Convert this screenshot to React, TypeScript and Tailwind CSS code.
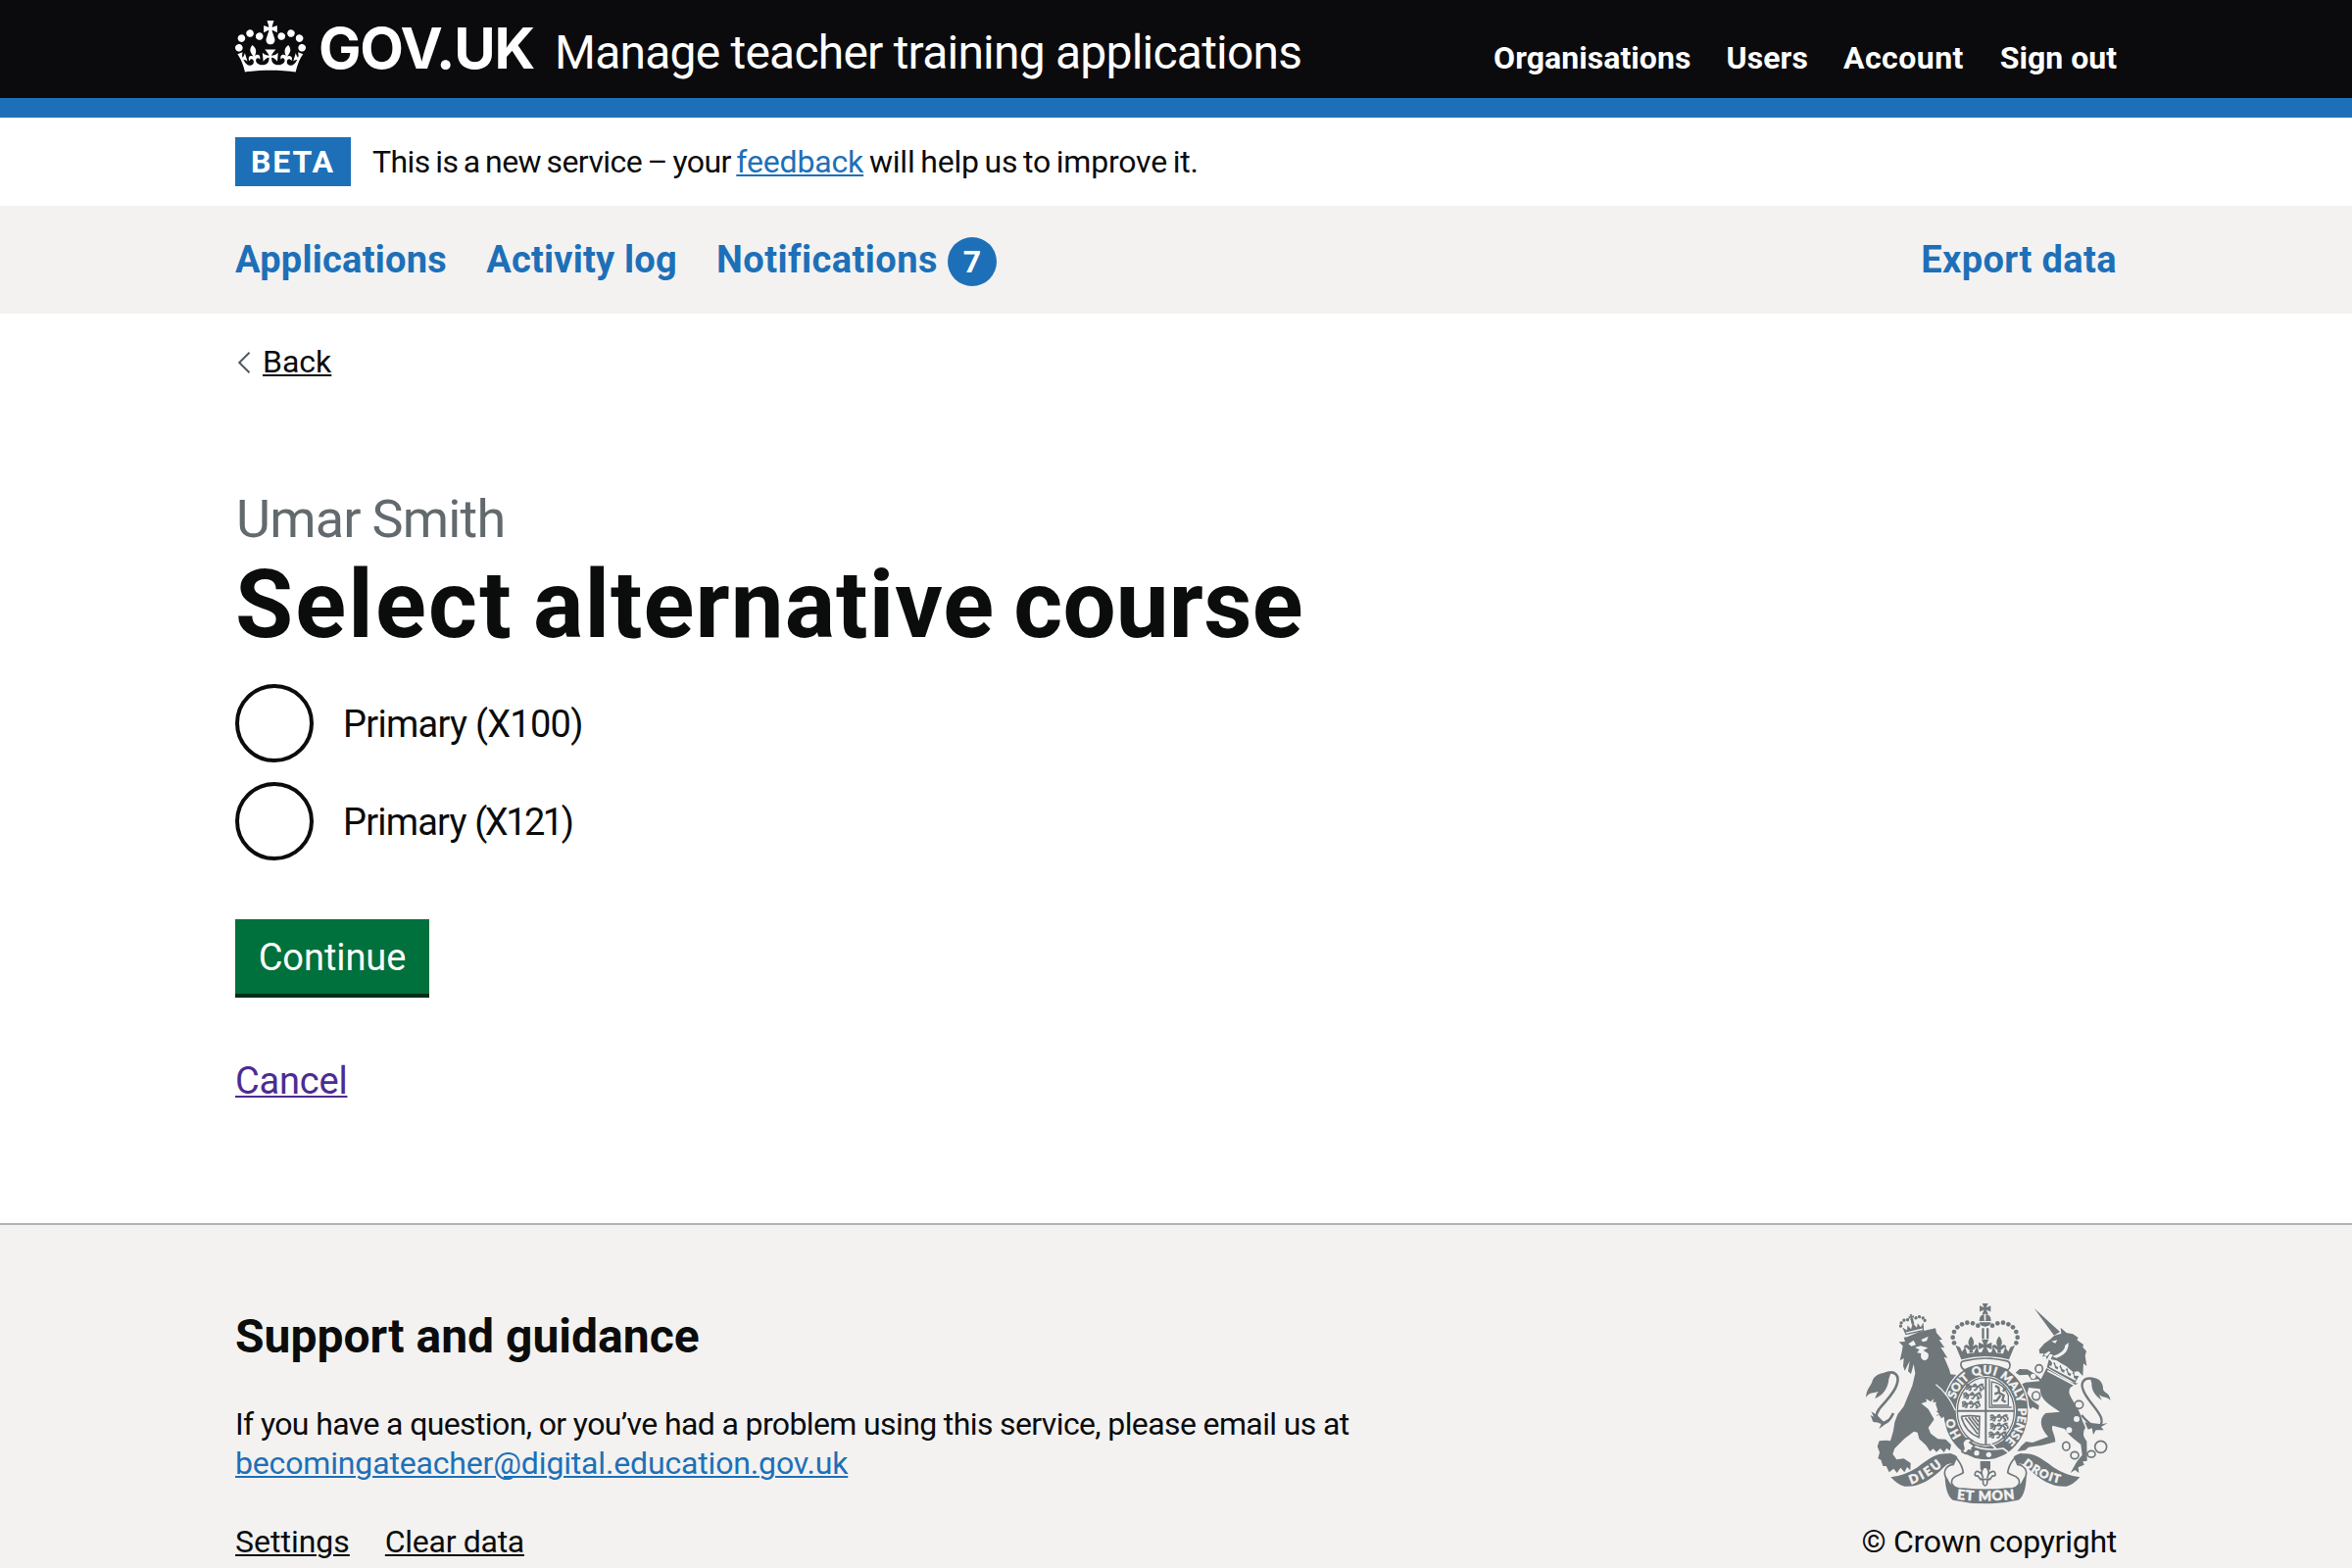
import React from "react";

const ARMS = "#6f777b";
const PAPER = "#f3f2f1";

function CrownLogo() {
  return (
    <svg className="mt-[21px] h-[53px] w-[72px] shrink-0" viewBox="0 0 132 97" fill="#ffffff" aria-hidden="true">
      <path
        fillRule="evenodd"
        d="M25 30.2c3.5 1.5 7.7-.2 9.1-3.7 1.5-3.6-.2-7.8-3.9-9.2-3.6-1.4-7.6.3-9.1 3.9-1.4 3.5.3 7.5 3.9 9zM9 39.5c3.6 1.5 7.8-.2 9.2-3.7 1.5-3.6-.2-7.8-3.9-9.1-3.6-1.5-7.6.2-9.1 3.8-1.4 3.5.3 7.5 3.8 9zM4.4 57.2c3.5 1.5 7.7-.2 9.1-3.8 1.5-3.6-.2-7.7-3.9-9.1-3.5-1.5-7.6.3-9.1 3.8-1.4 3.5.3 7.6 3.9 9.1zm38.3-21.4c3.5 1.5 7.7-.2 9.1-3.8 1.5-3.6-.2-7.7-3.9-9.1-3.6-1.5-7.6.3-9.1 3.8-1.3 3.6.4 7.7 3.9 9.1zm64.4-5.6c-3.6 1.5-7.8-.2-9.1-3.7-1.5-3.6.2-7.8 3.8-9.2 3.6-1.4 7.7.3 9.2 3.9 1.3 3.5-.4 7.5-3.9 9zm15.9 9.3c-3.6 1.5-7.7-.2-9.1-3.7-1.5-3.6.2-7.8 3.7-9.1 3.6-1.5 7.7.2 9.2 3.8 1.5 3.5-.3 7.5-3.8 9zm4.7 17.7c-3.6 1.5-7.8-.2-9.2-3.8-1.5-3.6.2-7.7 3.9-9.1 3.6-1.5 7.7.3 9.2 3.8 1.3 3.5-.4 7.6-3.9 9.1zM89.3 35.8c-3.6 1.5-7.8-.2-9.2-3.8-1.4-3.6.2-7.7 3.9-9.1 3.6-1.5 7.7.3 9.2 3.8 1.4 3.6-.3 7.7-3.9 9.1zM69.7 17.7l8.9 4.7V9.3l-8.9 2.8c-.2-.3-.5-.6-.9-.9L72.4 0H59.6l3.5 11.2c-.3.3-.6.5-.9.9l-8.8-2.8v13.1l8.8-4.7c.3.3.6.7.9.9l-5 15.4v.1c-.2.8-.4 1.6-.4 2.4 0 4.1 3.1 7.5 7 8.1h.2c.3 0 .7.1 1 .1.4 0 .7 0 1-.1h.2c4-.6 7.1-4.1 7.1-8.1 0-.8-.1-1.7-.4-2.4V34l-5.1-15.4c.4-.2.7-.6 1-.9zM66 92.8c16.9 0 32.8 1.1 47.1 3.2 4-16.9 8.9-26.7 14-33.5l-9.6-3.4c1 4.9 1.1 7.2 0 10.2-1.5-1.4-3-4.3-4.2-8.7L108.6 76c2.8-2 5-3.2 7.5-3.3-4.4 9.4-10 11.9-13.6 11.2-4.3-.8-6.3-4.6-5.6-7.9 1-4.7 5.7-5.9 8-.5 4.3-8.7-3-11.4-7.6-8.8 7.1-7.2 7.9-13.5 2.1-21.1-8 6.1-8.1 12.3-4.5 20.8-4.7-5.4-12.1-2.5-9.5 6.2 3.4-5.2 7.9-2 7.2 3.1-.6 4.3-6.4 7.8-13.5 7.2-10.3-.9-10.9-8-11.2-13.8 2.5-.5 7.1 1.8 11 7.3L80.2 60c-4.1 4.4-8 5.3-12.3 5.4 1.4-4.4 8-11.6 8-11.6H55.5s6.4 7.2 7.9 11.6c-4.2-.1-8-1-12.3-5.4l1.4 16.4c3.9-5.5 8.5-7.7 10.9-7.3-.3 5.8-.9 12.8-11.1 13.8-7.2.6-12.9-2.9-13.5-7.2-.7-5 3.8-8.3 7.1-3.1 2.7-8.7-4.6-11.6-9.4-6.2 3.7-8.5 3.6-14.7-4.6-20.8-5.8 7.6-5 13.9 2.2 21.1-4.7-2.6-11.9.1-7.7 8.8 2.3-5.5 7.1-4.2 8.1.5.7 3.3-1.3 7.1-5.7 7.9-3.5.7-9-1.8-13.5-11.2 2.5.1 4.7 1.3 7.5 3.3l-4.7-15.4c-1.2 4.4-2.7 7.2-4.3 8.7-1.1-3-.9-5.3 0-10.2l-9.5 3.4c5 6.9 9.9 16.7 14 33.5 14.8-2.1 30.8-3.2 47.7-3.2z"
      />
    </svg>
  );
}

const crownBeads: [number, number][] = [
  [385, 98], [369, 91], [352, 89], [336, 94], [322, 103], [312, 117], [308, 134], [312, 151],
];

function Maltese({ x, y, r }: { x: number; y: number; r: number }) {
  return (
    <path
      transform={`translate(${x} ${y}) scale(${r})`}
      d="M-.55-1H.55L.2-.2 1-.55V.55L.2.2 .55 1H-.55L-.2.2-1 .55V-.55L-.2-.2Z"
    />
  );
}

function Fleur({ x, y, s }: { x: number; y: number; s: number }) {
  return (
    <path
      transform={`translate(${x} ${y}) scale(${s})`}
      d="M0-22C9-10 9-4 4 5 12-3 20 0 19 10 14 6 10 9 8 14H4L5 22H-5L-4 14H-8C-10 9-14 6-19 10-20 0-12-3-4 5-9-4-9-10 0-22Z"
    />
  );
}

/* One passant lion of the quartered shield, roughly 62 wide and 22 high. */
function Passant({ x, y }: { x: number; y: number }) {
  return (
    <path
      transform={`translate(${x} ${y})`}
      fill="none"
      stroke={ARMS}
      strokeWidth="5"
      strokeLinejoin="round"
      d="M2 4l8-2 4 4-4 4-8-2M12 8h28l8-6h8M14 10l-8 6H2M18 10l-2 9h-6M38 10l-6 9h-6M42 9l8 8v3h-7M24 5l6-4 4 4M48 4l8 6v8"
    />
  );
}

function RoyalArms({ className }: { className: string }) {
  return (
    <svg className={className} viewBox="42 30 756 615" fill={ARMS} role="img" aria-label="Royal coat of arms">
      <defs>
        <path id="garter" d="M409 474A99 114 0 0 1 409 246A99 114 0 0 1 409 474" />
        <path id="ribbonLeft" d="M180 584Q232 568 290 514" />
        <path id="ribbonRight" d="M521 524Q580 574 652 584" />
        <path id="ribbonMid" d="M318 629Q408 640 502 628" />
      </defs>

      {/* lion */}
      <path d="M143 148L162 147 158 134 168 133 205 117 255 106 258 120 276 141 266 142 283 166 271 164 292 197 281 194 297 232 301 247 320 249 300 272 292 304 290 316 309 342 315 366 306 387 297 379 291 394 283 378 272 382 270 368 253 378 257 360 240 358 251 345 212 336 222 344 246 364 250 386 233 410 240 428 262 445 286 446 303 463 299 481 289 473 281 486 270 474 258 485 248 475 238 483 226 464 205 445 200 425 189 422 160 444 130 474 124 491 136 508 158 505 179 519 178 541 168 531 160 547 148 533 137 549 127 536 113 547 104 528 94 528 88 509 79 505 84 486 77 468 83 451 104 449 117 451 126 420 130 394 139 370 158 345 168 320 184 282 193 244 188 216 180 246 171 238 176 206 161 236 156 222 158 198 146 205 152 178 155 160Z" />
      <path fill={PAPER} d="M212 336L228 331 226 322 240 331 250 322 247 334 262 330 268 338 262 345 270 356 257 360 268 369 258 372 262 384 248 380 232 352Z" />
      <path fill={PAPER} d="M172 154L188 143 195 157 181 161ZM211 141L233 131 228 145 216 148ZM192 165L209 160 232 166 218 174 233 184Q236 203 221 205 207 201 211 183L198 181 206 172Z" />
      <g transform="rotate(-13 186 98)">
        <path d="M158 121H215L219 96 208 108 202 94 196 107 187 90 178 107 170 94 165 108 153 96Z" />
        <path fill={PAPER} d="M160 113h52v4h-52z" />
        <Maltese x={187} y={71} r={8} />
        <path d="M183 76h8v18h-8z" />
        {[
          [174, 77], [163, 76], [153, 82], [149, 91], [200, 77], [211, 76], [221, 82], [225, 91],
        ].map(([x, y]) => (
          <circle key={`${x}-${y}`} cx={x} cy={y} r="5" />
        ))}
      </g>
      <path fill="none" stroke={ARMS} strokeWidth="8" d="M97 247C134 230 145 254 137 277C128 308 100 330 82 354C70 372 72 386 86 394C104 400 114 390 126 366" />
      <path d="M118 244C96 238 70 246 62 266C58 284 44 288 42 318C55 300 63 306 80 300C71 312 75 312 69 322C94 312 110 290 112 262ZM76 372L58 361 66 377 56 372 64 393 90 396 82 414 108 395 124 376 96 392Z" />

      {/* unicorn */}
      <path d="M557 45L636 117 618 128Z" />
      <path d="M572 172L588 153 606 140 618 129 640 122 638 104 656 120 676 124 692 135 688 142 708 156 706 164 717 176 713 190 718 222 708 214 706 252 692 238 676 240 655 222 640 214 626 205 608 201 614 186 604 186 596 202 592 190 582 194 586 183 574 184Z" />
      <path fill={PAPER} d="M610 146L628 142 622 152ZM662 150Q664 184 625 197L612 192Q652 180 652 158ZM586 187L603 176 607 180 596 192Z" />
      <path d="M595 228L667 270 692 275Q660 284 664 304C672 330 696 350 704 388L714 410Q700 430 718 452L719 512 706 514 710 524 692 532 694 549 682 540 668 549 688 514 704 494 700 462C682 446 668 440 650 414L614 404C606 414 622 432 622 454 598 462 566 468 540 470L530 479 505 483 518 466 532 453 552 456 600 438C576 412 570 384 592 366L636 362C604 340 576 326 575 292L540 288 536 306 550 326 572 343 570 356 552 347 546 354 528 326 512 322 520 300 508 282 530 272 574 268 570 262 548 264 538 248 512 250 500 242 512 231 536 232 560 246 578 262Z" />
      <path d="M602 202L608 206 613 214 620 210 624 222 632 226 638 218 643 231 651 235 658 227 662 241 670 246 680 238 680 251 694 252 682 274 596 226Z" />
      <path fill="none" stroke={PAPER} strokeWidth="5" d="M598 236L680 280M604 222L684 264" />
      <g fill={PAPER}>
        <path d="M609 224l4-14 5 6 4 14zM628 234l4-13 5 6 4 13zM648 244l4-13 5 6 4 13zM667 254l5-12 5 5 2 13z" />
        <circle cx="687" cy="384" r="9" />
        <circle cx="664" cy="418" r="9" />
        <circle cx="554" cy="253" r="8" />
      </g>
      <g fill={PAPER} stroke={ARMS} strokeWidth="5">
        <ellipse cx="572" cy="230" rx="11" ry="12" />
        <ellipse cx="563" cy="313" rx="12" ry="13" />
        <ellipse cx="694" cy="340" rx="13" ry="12" />
        <ellipse cx="655" cy="467" rx="11" ry="13" />
        <ellipse cx="681" cy="495" rx="12" ry="11" />
        <ellipse cx="732" cy="491" rx="12" ry="10" />
        <circle cx="761" cy="469" r="18" />
      </g>
      <path fill="none" stroke={ARMS} strokeWidth="7" d="M738 261C706 254 700 276 706 292C714 322 752 352 762 380C768 402 756 412 738 404C724 398 712 384 702 372" />
      <path d="M728 258C752 254 770 272 768 294C776 308 786 300 791 328C780 314 768 320 756 310C760 320 762 320 764 326C744 314 732 296 733 274ZM712 394L722 416 734 412 738 432 746 418 770 418 762 408 782 396 764 400Z" />

      {/* crown */}
      <Maltese x={407} y={46} r={17} />
      <path d="M389 84Q389 63 407 63T425 84ZM389 88H425Q421 101 407 101T389 88ZM397 106h7v32h-7zM411 106h7v32h-7z" />
      <path fill={PAPER} d="M404 62h5v21h-5z" />
      {crownBeads.map(([x, y]) => (
        <React.Fragment key={`${x}-${y}`}>
          <circle cx={x} cy={y} r="7" />
          <circle cx={814 - x} cy={y} r="7" />
        </React.Fragment>
      ))}
      <path d="M316 158L330 164 336 178 346 164 352 184 372 182 382 162 388 180 402 180 410 180 426 180 432 162 442 182 462 184 468 164 478 178 484 164 498 158 480 202Q407 182 334 202Z" />
      <Maltese x={407} y={160} r={20} />
      <Fleur x={364} y={156} s={1.15} />
      <Fleur x={450} y={156} s={1.15} />

      {/* garter and shield */}
      <ellipse cx="409" cy="360" rx="133" ry="152" fill={PAPER} />
      <ellipse cx="409" cy="360" rx="129" ry="148" />
      <path fill={PAPER} stroke={ARMS} strokeWidth="5" d="M344 234C328 224 330 207 344 206Q407 190 472 206C486 208 486 226 476 234Q407 202 344 234Z" />
      <ellipse cx="409" cy="360" rx="92" ry="108" fill={PAPER} />
      <ellipse cx="409" cy="360" rx="87" ry="103" fill="none" stroke={ARMS} strokeWidth="4" />
      <path d="M406 257h6v206h-6zM322 356h174v6H322z" />
      <Passant x={346} y={276} />
      <Passant x={338} y={302} />
      <Passant x={334} y={329} />
      <Passant x={420} y={370} />
      <Passant x={420} y={396} />
      <Passant x={416} y={422} />
      <path fill="none" stroke={ARMS} strokeWidth="4" d="M420 262V348H488M427 270Q464 274 478 312V342H427Z" />
      <path fill="none" stroke={ARMS} strokeWidth="7" d="M438 282l10 6 2 16 14 8-4 14 10 6M450 302l-14 6M454 312l-12 16h-10M462 300l6-12" />
      <path fill="none" stroke={ARMS} strokeWidth="5" d="M334 376Q360 372 390 376L388 440Q346 424 334 376M346 380L384 430M356 378L386 418M366 378L386 404M376 378L387 392" />
      {/* forepaw over the garter */}
      <path d="M258 282Q288 306 312 352L314 366 306 390 297 381 289 396 282 378 268 376 256 340Z" />
      <path fill="none" stroke={PAPER} strokeWidth="4" d="M256 278Q292 304 316 358" />
      <g fill={PAPER} stroke={PAPER} strokeWidth="1.2" fontFamily="Lato, sans-serif" fontWeight="900" fontSize="36">
        <text>
          <textPath href="#garter" startOffset="13%" letterSpacing="3">HO</textPath>
        </text>
        <text>
          <textPath href="#garter" startOffset="30.5%" letterSpacing="-1">SOIT</textPath>
        </text>
        <text>
          <textPath href="#garter" startOffset="44%" letterSpacing="2">QUI</textPath>
        </text>
        <text>
          <textPath href="#garter" startOffset="56.5%" letterSpacing="0">MALY</textPath>
        </text>
        <text>
          <textPath href="#garter" startOffset="73.5%" letterSpacing="0">PENSE</textPath>
        </text>
      </g>
      <path fill="none" stroke={PAPER} strokeWidth="5" d="M364 462Q400 484 462 474L478 486M424 460L440 474" />
      <g fill={PAPER}>
        <circle cx="381" cy="488" r="8" />
        <circle cx="418" cy="493" r="8" />
      </g>
      <path fill={PAPER} stroke={ARMS} strokeWidth="5" d="M338 458Q344 442 358 444L368 450 360 456 374 466 366 474 370 482 356 480 348 490 336 484 342 474Z" />

      {/* fleur-de-lis pendant */}
      <path d="M392 513h31v26h-31z" />
      <path fill={PAPER} stroke={ARMS} strokeWidth="5" strokeLinejoin="round" d="M407 528C420 540 420 548 414 562C418 544 440 536 438 556C434 562 430 554 428 560L422 568H414L413 582Q407 594 401 582L400 568H392L386 560C384 554 380 562 376 556C374 536 396 544 400 562C394 548 394 540 407 528Z" />
      <path d="M390 566h34v5h-34z" />

      {/* motto ribbon */}
      <path d="M118 562Q160 558 200 532C240 500 262 488 292 490Q310 490 322 500L312 524Q296 514 282 530C240 574 196 594 160 590Q140 586 118 562Z" />
      <path d="M697 562Q656 558 616 532C576 500 552 488 524 490Q506 490 494 500L504 524Q520 514 534 530C576 574 620 594 656 590Q676 586 697 562Z" />
      <path fill="none" stroke={ARMS} strokeWidth="5" d="M296 491C316 494 336 520 340 548C332 556 318 554 308 566C300 578 306 590 320 596M312 523C290 524 280 540 284 556C286 566 298 574 298 590M520 491C500 494 480 520 476 548C484 556 498 554 508 566C516 578 510 590 496 596M504 523C526 524 536 540 532 556C530 566 518 574 518 590" />
      <path d="M284 554Q296 594 340 595Q408 602 476 595Q520 594 533 554C534 590 524 626 508 632Q408 654 308 632C292 622 284 590 284 554Z" />
      <g fill={PAPER} stroke={PAPER} strokeWidth="1.5" fontFamily="Lato, sans-serif" fontWeight="900">
        <text fontSize="38">
          <textPath href="#ribbonLeft" textLength="112">DIEU</textPath>
        </text>
        <text fontSize="36">
          <textPath href="#ribbonRight" textLength="128">DROIT</textPath>
        </text>
        <text fontSize="42">
          <textPath href="#ribbonMid" startOffset="2" textLength="178">ET MON</textPath>
        </text>
      </g>
    </svg>
  );
}

const link = "underline decoration-[2px] underline-offset-[2px]";

export default function App() {
  return (
    <div className="h-[1600px] w-[2400px] overflow-hidden bg-white font-['Roboto',sans-serif] text-[#0b0c0c]">
      <header className="h-[120px] border-b-[20px] border-[#1d70b8] bg-[#0b0b0d] px-[240px] text-white">
        <div className="flex items-start">
          <CrownLogo />
          <span className="mt-[14px] ml-[13px] w-[241px] font-['Inter',sans-serif] text-[58px] leading-[70px] font-bold tracking-[-1.2px]">GOV.UK</span>
          <span className="mt-6 text-[48px] leading-[59px] tracking-[-0.78px] whitespace-nowrap">
            Manage teacher training applications
          </span>
          <nav className="mt-[39px] ml-auto flex gap-9 text-[32px] leading-[40px] font-bold whitespace-nowrap">
            <a className="tracking-[0.06px]">Organisations</a>
            <a className="tracking-[0.12px]">Users</a>
            <a className="mr-px tracking-[0.46px]">Account</a>
            <a>Sign out</a>
          </nav>
        </div>
      </header>

      <div className="flex h-[90px] items-start px-[240px] pt-5 text-[32px] leading-[40px]">
        <strong className="flex h-[50px] w-[118px] items-center justify-center bg-[#1d70b8] font-bold tracking-[1.9px] text-white">
          BETA
        </strong>
        <p className="mt-[5px] ml-[22px] tracking-[-0.55px] whitespace-nowrap [word-spacing:-2px]">
          This is a new service – your <a className={`${link} tracking-[-0.15px] text-[#1d70b8]`}>feedback</a>
          <span className="tracking-[-0.2px]"> will help us to improve it.</span>
        </p>
      </div>

      <nav className="flex h-[110px] items-start bg-[#f3f2f1] px-[240px] pt-[32px] text-[38px] leading-[44px] font-bold whitespace-nowrap text-[#1d70b8]">
        <a className="mt-px mr-10 tracking-[0.25px]">Applications</a>
        <a className="mt-px mr-10 tracking-[0.22px]">Activity log</a>
        <a className="mt-px tracking-[0.45px]">Notifications</a>
        <span className="ml-[10px] flex size-[50px] items-center justify-center rounded-full bg-[#1d70b8] text-[32px] leading-[40px] text-white">
          7
        </span>
        <a className="mt-px ml-auto tracking-[0.37px]">Export data</a>
      </nav>

      <main className="h-[928px] px-[240px] pt-[29px]">
        <div className="flex items-start text-[32px] leading-[40px]">
          <svg className="mt-[10px] h-[22px] w-[28px]" viewBox="0 0 28 22" fill="none" stroke="#505a5f" strokeWidth="2" aria-hidden="true">
            <path d="M14.5.7L4.2 11l10.3 10.3" />
          </svg>
          <a className={link}>Back</a>
        </div>

        <h1 className="mt-[109px] text-[96px] leading-[112px] font-bold [word-spacing:-6px]">
          <span className="block pl-px text-[54px] leading-[63px] font-normal tracking-[-0.8px] text-[#626a6e] [word-spacing:-1px]">
            Umar Smith
          </span>
          <span className="tracking-[2.2px]">Select </span>
          <span className="tracking-[1.1px]">alternative </span>
          <span className="tracking-[0.2px]">course</span>
        </h1>

        <div className="mt-[25px] flex flex-col gap-5 text-[38px] leading-[44px]">
          <label className="flex h-20 items-start">
            <span className="size-20 rounded-full border-4 border-[#0b0c0c]" />
            <span className="mt-[19px] ml-[30px] tracking-[-0.72px]">Primary (X100)</span>
          </label>
          <label className="flex h-20 items-start">
            <span className="size-20 rounded-full border-4 border-[#0b0c0c]" />
            <span className="mt-[19px] ml-[30px] tracking-[-0.8px]">
              Primary <span className="tracking-[-2.5px]">(X121)</span>
            </span>
          </label>
        </div>

        <button className="mt-[60px] block h-20 w-[198px] border-b-4 border-[#002d18] bg-[#00703c] pt-[2px] text-center text-[38px] leading-[44px] tracking-[-0.07px] text-white">
          Continue
        </button>
        <p className="mt-[63px] text-[38px] leading-[44px]">
          <a className={`${link} tracking-[-0.2px] text-[#4c2c92]`}>Cancel</a>
        </p>
      </main>

      <footer className="flex h-[352px] items-start justify-between border-t-2 border-[#b1b4b6] bg-[#f3f2f1] px-[240px] text-[32px] leading-[40px] whitespace-nowrap">
        <div>
          <h2 className="mt-[84px] text-[48px] leading-[59px] font-bold">Support and guidance</h2>
          <p className="mt-10 tracking-[-0.62px]">
            If you have a question, or you’ve had a problem using this service, please email us at
            <br />
            <a className={`${link} tracking-[-0.16px] text-[#1d70b8]`}>becomingateacher@digital.education.gov.uk</a>
          </p>
          <div className="mt-10 flex gap-9">
            <a className={link}>Settings</a>
            <a className={`${link} tracking-[-0.3px]`}>Clear data</a>
          </div>
        </div>
        <div className="mt-20 flex flex-col items-end">
          <div className="mr-1">
            <RoyalArms className="h-[205px] w-[252px]" />
          </div>
          <p className="mt-[18px] tracking-[-0.26px]">© Crown copyright</p>
        </div>
      </footer>
    </div>
  );
}
